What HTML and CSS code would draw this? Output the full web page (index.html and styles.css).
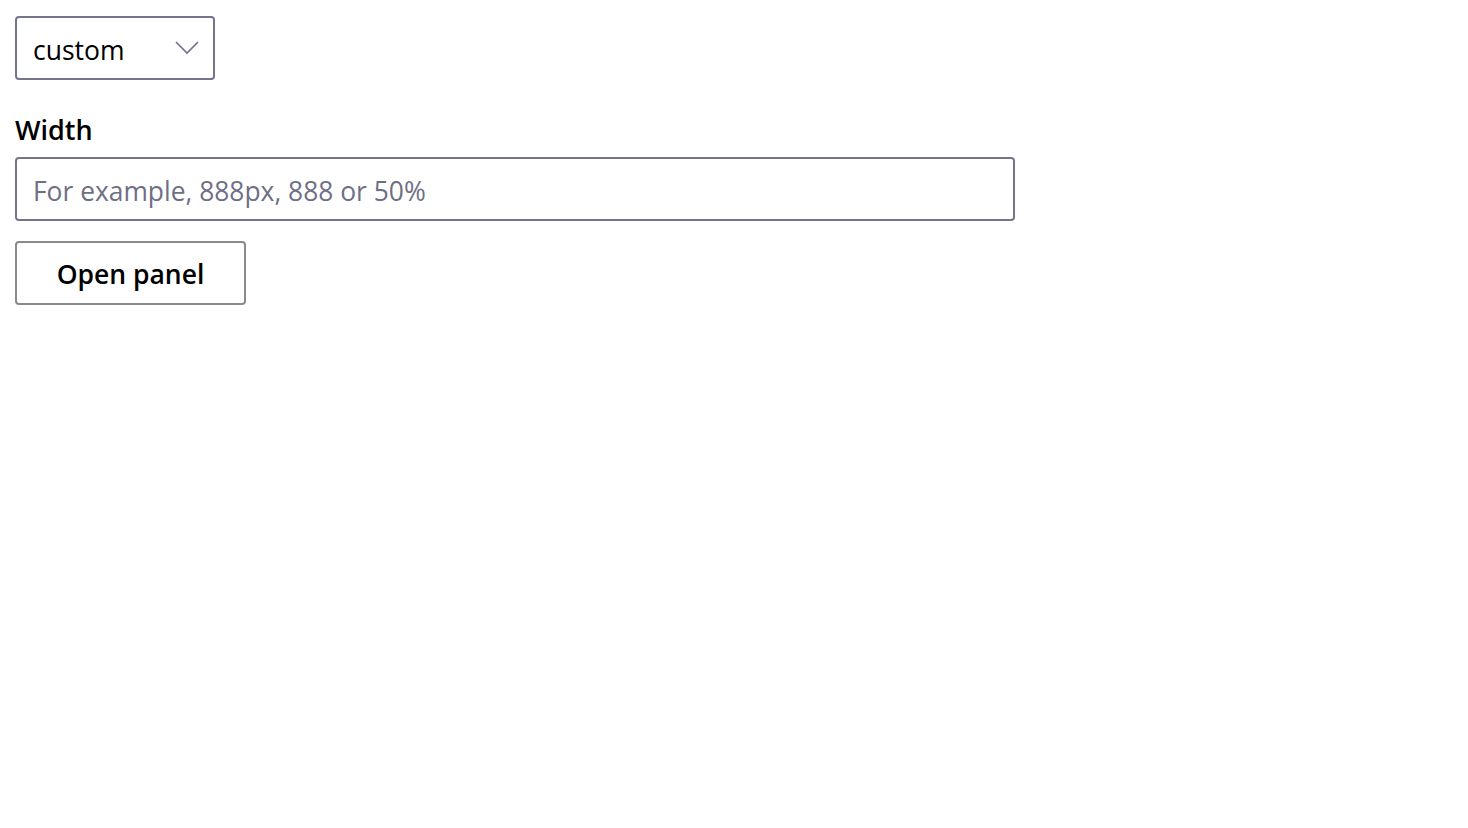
FILE: index.html
```html
<!DOCTYPE html>
<html>
<head>
<meta charset="utf-8">
<link rel="stylesheet" href="styles.css">
</head>
<body>
<div class="page">
  <div class="dropdown">
    <span class="dropdown-text">custom</span>
    <svg class="chevron" width="24" height="16" viewBox="0 0 24 16"><path d="M1 2 L12 13 L23 2" fill="none" stroke="#6f708a" stroke-width="1.6"/></svg>
  </div>
  <label class="label">Width</label>
  <div class="field"><input class="input" type="text" placeholder="For example, 888px, 888 or 50%"></div>
  <button class="button">Open panel</button>
</div>
</body>
</html>
```
FILE: styles.css
```css
html, body { margin: 0; padding: 0; background: #fff; }
body { font-family: "Open Sans", "Noto Sans", sans-serif; color: #000; }
.page { padding: 16px 15px; display: flex; flex-direction: column; align-items: flex-start; }
.dropdown {
  box-sizing: border-box; width: 200px; height: 64px;
  border: 2px solid #74758a; border-radius: 4px;
  display: flex; align-items: center; justify-content: space-between;
  padding: 0 14px 0 16px;
}
.dropdown-text { font-size: 26.5px; line-height: 56px; padding-top: 4px; }
.chevron { display: block; margin-top: 0; }
.label { font-size: 27px; font-weight: 600; margin-top: 30px; line-height: 40px; height: 40px; margin-bottom: 7px; }
.field {
  box-sizing: border-box; width: 1000px; height: 64px;
  border: 2px solid #74758a; border-radius: 4px; display: flex;
}
.input { border: 0; outline: none; flex: 1; padding: 3px 16px 0; font-family: inherit; font-size: 26.4px; background: transparent; }
.input::placeholder { color: #6e6f85; }
.button {
  box-sizing: border-box; width: 231px; height: 64px; margin-top: 20px;
  border: 2px solid #8a8a8a; border-radius: 4px; background: #fff;
  font-family: inherit; font-size: 26.5px; font-weight: 600; color: #000; padding: 2px 0 0;
}
```
